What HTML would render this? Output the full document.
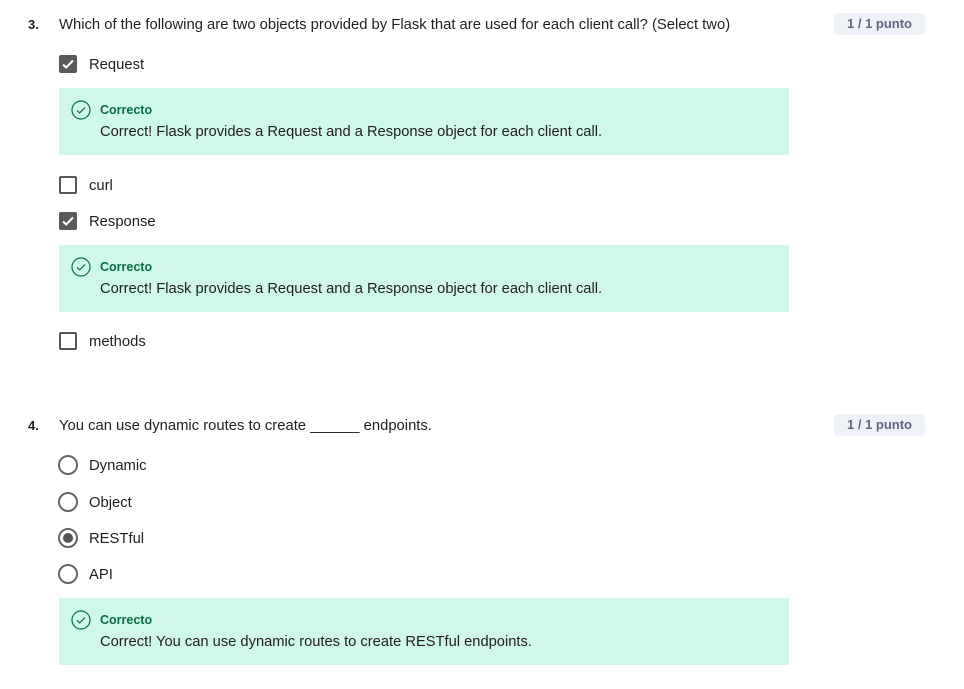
<!DOCTYPE html>
<html><head><meta charset="utf-8"><style>
body{margin:0;width:964px;height:689px;background:#fff;font-family:"Liberation Sans",sans-serif;color:#1f1f1f;position:relative;overflow:hidden}
.a{position:absolute;white-space:nowrap}
.t{font-size:14.8px;line-height:18px;margin-top:1px}
.n{font-weight:bold;font-size:13px}
.badge{position:absolute;left:834px;width:91px;height:22px;background:#eef1f7;border-radius:4px;color:#5b6780;font-weight:bold;font-size:13px;line-height:22px;text-align:center}
.cb{position:absolute;left:59px;width:18px;height:18px;box-sizing:border-box;border:2px solid #555;border-radius:2px;background:#fff}
.cb.on{background:#5a5a5a;border-color:#5a5a5a}
.rd{position:absolute;left:58px;width:20px;height:20px;box-sizing:border-box;border:2px solid #666;border-radius:50%}
.rd.on::after{content:"";position:absolute;left:3px;top:3px;width:10px;height:10px;border-radius:50%;background:#555}
.box{position:absolute;left:59px;width:730px;height:67px;background:#cff7ea}
.box svg{position:absolute;left:12px;top:12px}
.box .h{position:absolute;left:41px;top:15px;font-size:12.5px;font-weight:bold;color:#0b6b44}
.box .b{position:absolute;left:41px;top:36px;font-size:14.7px}
</style></head><body>
<div class="a n" style="left:28px;top:17px">3.</div>
<div class="a t" style="left:59px;top:15px">Which of the following are two objects provided by Flask that are used for each client call? (Select two)</div>
<div class="badge" style="top:13px">1 / 1 punto</div>

<div class="cb on" style="top:55px"><svg width="14" height="14" viewBox="0 0 14 14"><path d="M2 7.5l3.2 3L12 3.5" stroke="#fff" stroke-width="2" fill="none"/></svg></div>
<div class="a t" style="left:89px;top:55px">Request</div>
<div class="box" style="top:88px"><svg width="20" height="20" viewBox="0 0 20 20"><circle cx="10" cy="10" r="9" stroke="#0b6b44" stroke-width="1.2" fill="none"/><path d="M6 10.3l2.7 2.6L14 7.5" stroke="#0b6b44" stroke-width="1.2" fill="none"/></svg><div class="h">Correcto</div><div class="b">Correct! Flask provides a Request and a Response object for each client call.</div></div>

<div class="cb" style="top:176px"></div>
<div class="a t" style="left:89px;top:176px">curl</div>
<div class="cb on" style="top:212px"><svg width="14" height="14" viewBox="0 0 14 14"><path d="M2 7.5l3.2 3L12 3.5" stroke="#fff" stroke-width="2" fill="none"/></svg></div>
<div class="a t" style="left:89px;top:212px">Response</div>
<div class="box" style="top:245px"><svg width="20" height="20" viewBox="0 0 20 20"><circle cx="10" cy="10" r="9" stroke="#0b6b44" stroke-width="1.2" fill="none"/><path d="M6 10.3l2.7 2.6L14 7.5" stroke="#0b6b44" stroke-width="1.2" fill="none"/></svg><div class="h">Correcto</div><div class="b">Correct! Flask provides a Request and a Response object for each client call.</div></div>
<div class="cb" style="top:332px"></div>
<div class="a t" style="left:89px;top:332px">methods</div>

<div class="a n" style="left:28px;top:418px">4.</div>
<div class="a t" style="left:59px;top:416px">You can use dynamic routes to create ______ endpoints.</div>
<div class="badge" style="top:414px">1 / 1 punto</div>

<div class="rd" style="top:455px"></div><div class="a t" style="left:89px;top:456px">Dynamic</div>
<div class="rd" style="top:492px"></div><div class="a t" style="left:89px;top:493px">Object</div>
<div class="rd on" style="top:528px"></div><div class="a t" style="left:89px;top:529px">RESTful</div>
<div class="rd" style="top:564px"></div><div class="a t" style="left:89px;top:565px">API</div>
<div class="box" style="top:598px"><svg width="20" height="20" viewBox="0 0 20 20"><circle cx="10" cy="10" r="9" stroke="#0b6b44" stroke-width="1.2" fill="none"/><path d="M6 10.3l2.7 2.6L14 7.5" stroke="#0b6b44" stroke-width="1.2" fill="none"/></svg><div class="h">Correcto</div><div class="b">Correct! You can use dynamic routes to create RESTful endpoints.</div></div>
</body></html>
